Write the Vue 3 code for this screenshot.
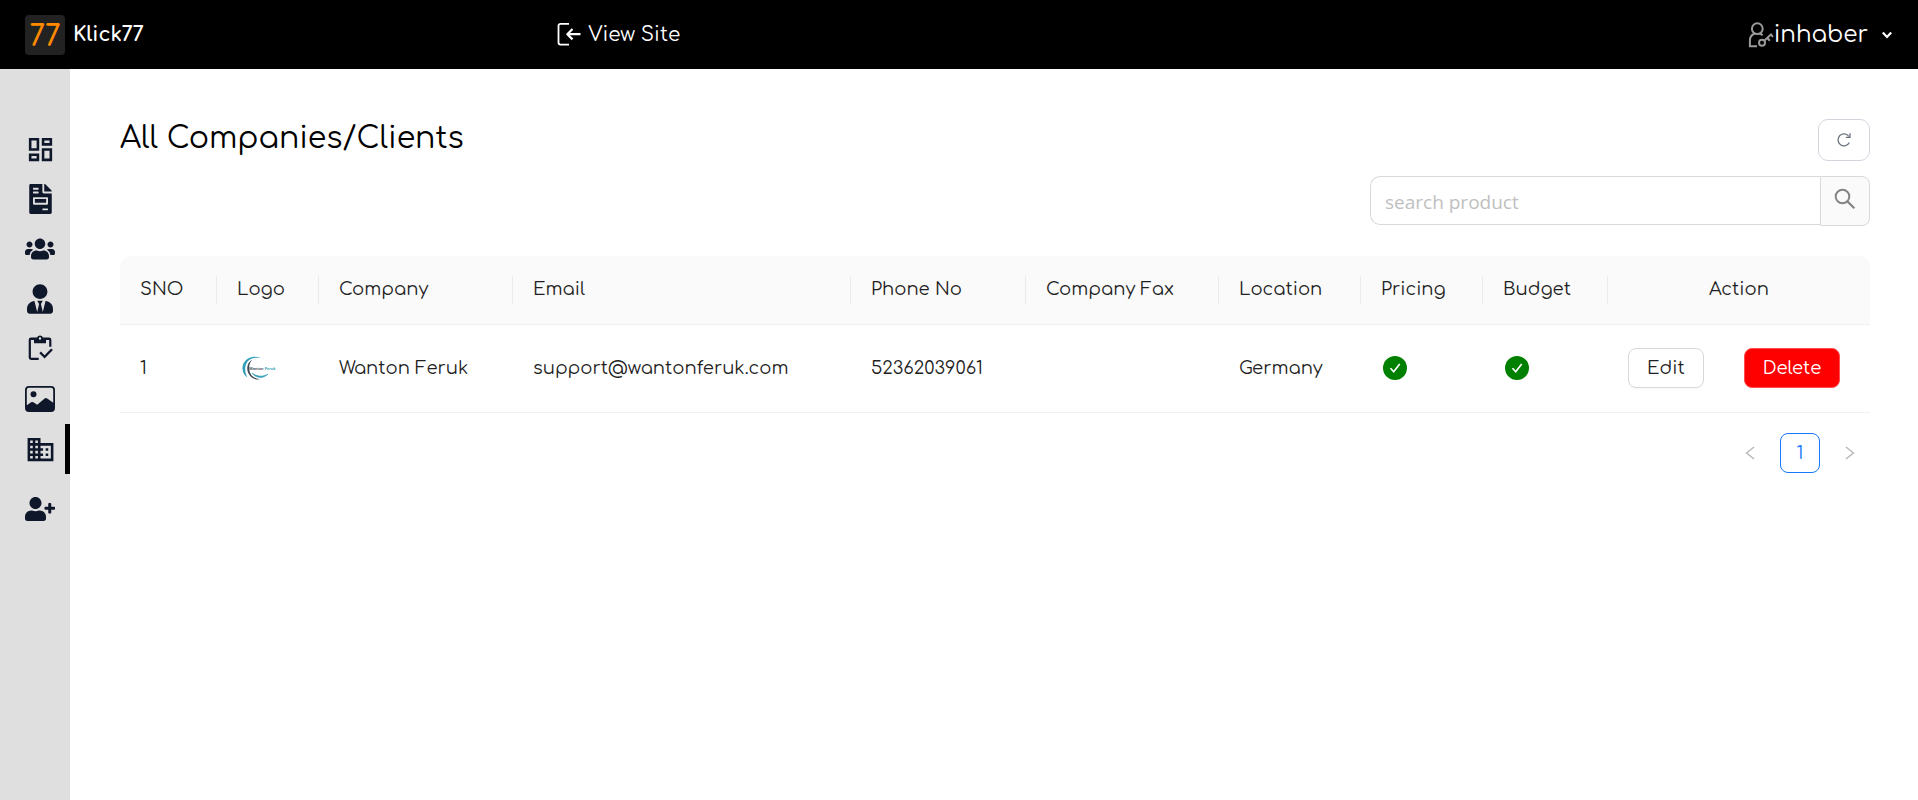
<script setup>
import { ref } from 'vue'

const search = ref('')
const active = ref('Companies')

const menu = [
  {
    name: 'Dashboard', box: '0 0 24 24', w: 31, h: 31,
    d: 'M19 5v2h-4V5h4M9 5v6H5V5h4m10 8v6h-4v-6h4M9 17v2H5v-2h4M21 3h-8v6h8V3zM11 3H3v10h8V3zm10 8h-8v10h8V11zm-10 4H3v6h8v-6z'
  },
  {
    name: 'Invoices', box: '0 0 384 512', w: 23, h: 30,
    d: 'M288 256H96v64h192v-64zm89-151L279.1 7c-4.5-4.5-10.6-7-17-7H256v128h128v-6.1c0-6.3-2.5-12.4-7-16.9zm-153 31V0H24C10.7 0 0 10.7 0 24v464c0 13.3 10.7 24 24 24h336c13.3 0 24-10.7 24-24V160H248c-13.2 0-24-10.8-24-24zM64 72c0-4.42 3.58-8 8-8h80c4.42 0 8 3.58 8 8v16c0 4.42-3.58 8-8 8H72c-4.42 0-8-3.58-8-8V72zm0 64c0-4.42 3.58-8 8-8h80c4.42 0 8 3.58 8 8v16c0 4.42-3.58 8-8 8H72c-4.42 0-8-3.58-8-8v-16zm256 304c0 4.42-3.58 8-8 8h-80c-4.42 0-8-3.58-8-8v-16c0-4.42 3.58-8 8-8h80c4.42 0 8 3.58 8 8v16zm0-200v96c0 8.84-7.16 16-16 16H80c-8.84 0-16-7.16-16-16v-96c0-8.84 7.16-16 16-16h224c8.84 0 16 7.16 16 16z'
  },
  {
    name: 'Users', box: '0 0 640 512', w: 30, h: 24,
    d: 'M96 224c35.3 0 64-28.7 64-64s-28.7-64-64-64-64 28.7-64 64 28.7 64 64 64zm448 0c35.3 0 64-28.7 64-64s-28.7-64-64-64-64 28.7-64 64 28.7 64 64 64zm32 32h-64c-17.6 0-33.5 7.1-45.1 18.6 40.3 22.1 68.9 62 75.1 109.4h66c17.7 0 32-14.3 32-32v-32c0-35.3-28.7-64-64-64zm-256 0c61.9 0 112-50.1 112-112S381.9 32 320 32 208 82.1 208 144s50.1 112 112 112zm76.8 32h-8.3c-20.8 10-43.9 16-68.5 16s-47.6-6-68.5-16h-8.3C179.6 288 128 339.6 128 403.2V432c0 26.5 21.5 48 48 48h288c26.5 0 48-21.5 48-48v-28.8c0-63.6-51.6-115.2-115.2-115.2zm-223.7-13.4C161.5 263.1 145.6 256 128 256H64c-35.3 0-64 28.7-64 64v32c0 17.7 14.3 32 32 32h65.9c6.3-47.4 34.9-87.3 75.2-109.4z'
  },
  {
    name: 'Managers', box: '0 0 448 512', w: 26, h: 30,
    d: 'M224 256c70.7 0 128-57.3 128-128S294.7 0 224 0 96 57.3 96 128s57.3 128 128 128zm95.8 32.6L272 480l-32-136 32-56h-96l32 56-32 136-47.8-191.4C56.9 292 0 350.3 0 422.4V464c0 26.5 21.5 48 48 48h352c26.5 0 48-21.5 48-48v-41.6c0-72.1-56.9-130.4-128.2-133.8z'
  },
  {
    name: 'Tasks', box: '0 0 30 30', w: 30, h: 30,
    d: 'M12 3.6a3.2 3.2 0 0 1 6 0h6a2.4 2.4 0 0 1 2.4 2.4v6.8h-2.2V6H21v3.2H9V6H5.9v17.8h7.8V26H6.1A2.4 2.4 0 0 1 3.7 23.6V6a2.4 2.4 0 0 1 2.4-2.4zM15 3.3a1.2 1.2 0 1 0 0 2.4a1.2 1.2 0 0 0 0-2.4zM15.9 17.6L19.6 21.3L26.2 14.5L27.9 16.1L19.6 24.6L14.3 19.2z'
  },
  {
    name: 'Gallery', box: '0 0 30 26', w: 30, h: 26,
    d: 'M4 0h22a4 4 0 0 1 4 4v18a4 4 0 0 1-4 4H4a4 4 0 0 1-4-4V4a4 4 0 0 1 4-4zM4 1.8A2.2 2.2 0 0 0 1.8 4v15.3l4.3-3a2 2 0 0 1 2.3 0l3.8 2.5L19.6 12.6a2 2 0 0 1 2.6-.1l6 4.3V4A2.2 2.2 0 0 0 26 1.8zM8.5 5.3a3 3 0 1 1 0 6a3 3 0 0 1 0-6z'
  },
  {
    name: 'Companies', box: '0 0 24 24', w: 31, h: 31,
    d: 'M12 7V3H2v18h20V7H12zM6 19H4v-2h2v2zm0-4H4v-2h2v2zm0-4H4V9h2v2zm0-4H4V5h2v2zm4 12H8v-2h2v2zm0-4H8v-2h2v2zm0-4H8V9h2v2zm0-4H8V5h2v2zm10 12h-8v-2h2v-2h-2v-2h2v-2h-2V9h8v10zm-2-8h-2v2h2v-2zm0 4h-2v2h2v-2z'
  },
  {
    name: 'Add user', box: '0 0 640 512', w: 30, h: 24, spaced: true,
    d: 'M624 208h-64v-64c0-8.8-7.2-16-16-16h-32c-8.8 0-16 7.2-16 16v64h-64c-8.8 0-16 7.2-16 16v32c0 8.8 7.2 16 16 16h64v64c0 8.8 7.2 16 16 16h32c8.8 0 16-7.2 16-16v-64h64c8.8 0 16-7.2 16-16v-32c0-8.8-7.2-16-16-16zm-400 48c70.7 0 128-57.3 128-128S294.7 0 224 0 96 57.3 96 128s57.3 128 128 128zm89.6 32h-16.7c-22.2 10.2-46.9 16-72.9 16s-50.6-5.8-72.9-16h-16.7C60.2 288 0 348.2 0 422.4V464c0 26.5 21.5 48 48 48h352c26.5 0 48-21.5 48-48v-41.6c0-74.2-60.2-134.4-134.4-134.4z'
  }
]

const columns = [
  { title: 'SNO', cls: 'c-sno' },
  { title: 'Logo', cls: 'c-logo' },
  { title: 'Company', cls: 'c-company' },
  { title: 'Email', cls: 'c-email' },
  { title: 'Phone No', cls: 'c-phone' },
  { title: 'Company Fax', cls: 'c-fax' },
  { title: 'Location', cls: 'c-location' },
  { title: 'Pricing', cls: 'c-pricing' },
  { title: 'Budget', cls: 'c-budget' },
  { title: 'Action', cls: 'c-action' }
]

const rows = [
  { sno: 1, company: 'Wanton Feruk', email: 'support@wantonferuk.com', phone: '52362039061', fax: '', location: 'Germany' }
]
</script>

<template>
  <div class="page">
    <header class="topbar">
      <a class="brand" href="#">
        <span class="brand-mark">77</span>
        <span class="brand-name">Klick77</span>
      </a>
      <a class="view-site" href="#">
        <svg width="26" height="26" viewBox="0 0 26 26" fill="none" stroke="currentColor" stroke-width="1.8" stroke-linejoin="round" aria-hidden="true">
          <path d="M13 1.8H4.5A2 2 0 0 0 2.5 3.8V20.6A2 2 0 0 0 4.5 22.6H13" />
          <path d="M24.500 12.200H11.500M16.500 7L11.300 12.200L16.500 17.400" stroke-width="2.200" />
        </svg>
        <span>View Site</span>
      </a>
      <button class="account" type="button">
        <svg class="account-icon" width="26" height="26" viewBox="0 0 26 26" fill="none" stroke="currentColor" stroke-width="2" aria-hidden="true">
          <circle cx="9.300" cy="6.700" r="5.400" />
          <path d="M9 24.200H1.900V18.500C1.900 15 4 12.600 6.800 11.500M11.800 11.500C13 12 13.800 12.500 14.600 13.200" />
          <circle cx="14" cy="20.800" r="3" />
          <path d="M16.200 18.700L23 12.500L25 15M19.300 16L21.800 18.700" />
        </svg>
        <span>inhaber</span>
        <svg class="caret" width="10" height="8" viewBox="0 0 10 8" fill="none" stroke="currentColor" stroke-width="2.200" aria-hidden="true">
          <path d="M.8 1.500L5 5.900L9.200 1.500" />
        </svg>
      </button>
    </header>

    <div class="body">
      <nav class="sidebar" aria-label="Main">
        <a
          v-for="item in menu"
          :key="item.name"
          href="#"
          class="nav-item"
          :class="{ active: item.name === active, spaced: item.spaced }"
          :aria-label="item.name"
          @click.prevent="active = item.name"
        >
          <svg :width="item.w" :height="item.h" :viewBox="item.box" fill="currentColor" fill-rule="evenodd" aria-hidden="true">
            <path :d="item.d" />
          </svg>
        </a>
      </nav>

      <main class="content">
        <div class="heading">
          <h1>All Companies/Clients</h1>
          <button class="refresh" type="button" aria-label="Refresh">
            <svg width="16" height="16" viewBox="0 0 16 16" fill="none" stroke="currentColor" stroke-width="1.300" aria-hidden="true">
              <path d="M13.400 10.500A6 6 0 1 1 13 4.500" />
              <path d="M14 1.200V5.400H9.800" />
            </svg>
          </button>
        </div>

        <form class="search" role="search" @submit.prevent>
          <input v-model="search" type="text" placeholder="search product" aria-label="search product" />
          <button type="submit" aria-label="Search">
            <svg width="22" height="22" viewBox="0 0 22 22" fill="none" stroke="currentColor" stroke-width="2" aria-hidden="true">
              <circle cx="8.500" cy="8.500" r="6.800" />
              <path d="M13.300 13.300L20.300 20.300" stroke-width="2.300" />
            </svg>
          </button>
        </form>

        <table>
          <colgroup>
            <col v-for="c in columns" :key="c.cls" :class="c.cls" />
          </colgroup>
          <thead>
            <tr>
              <th v-for="c in columns" :key="c.cls" scope="col"><span>{{ c.title }}</span></th>
            </tr>
          </thead>
          <tbody>
            <tr v-for="r in rows" :key="r.sno">
              <td>{{ r.sno }}</td>
              <td>
                <svg class="logo" width="40" height="30" viewBox="0 0 40 30" role="img" aria-label="Wanton Feruk">
                  <path d="M24 5C13 1 5 8 5.500 16C5.800 20 8 23 10.500 24.500C6.500 18 7.500 8 15 5.500C18 4.400 21 4.500 24 5z" fill="#2f9fb8" />
                  <path d="M15.500 6.500C10 9.500 9 15.500 11.500 20.500C13.500 24.500 17.500 27 23 26.500C17 25.500 13.500 22.500 12.500 18C11.500 13.500 12.500 9.500 15.500 6.500z" fill="#3d4a52" />
                  <path d="M15 20C19 25.500 26.500 26 31 21C26.500 24 20 24 15 20z" fill="#2f9fb8" stroke="#2f9fb8" stroke-width=".6" />
                  <text class="logo-text" x="12" y="17" fill="#4a555c">Wanton <tspan fill="#2f9fb8">Feruk</tspan></text>
                </svg>
              </td>
              <td>{{ r.company }}</td>
              <td>{{ r.email }}</td>
              <td>{{ r.phone }}</td>
              <td>{{ r.fax }}</td>
              <td>{{ r.location }}</td>
              <td v-for="k in ['Pricing', 'Budget']" :key="k">
                <svg width="28" height="24" viewBox="0 0 28 24" role="img" :aria-label="k + ' enabled'">
                  <circle cx="14" cy="12" r="12" fill="#008000" />
                  <path d="M9.500 12.200L12.700 15.700L18.700 8" fill="none" stroke="#fff" stroke-width="1.700" />
                </svg>
              </td>
              <td>
                <div class="actions">
                  <button type="button" class="btn">Edit</button>
                  <button type="button" class="btn danger">Delete</button>
                </div>
              </td>
            </tr>
          </tbody>
        </table>

        <nav class="pagination" aria-label="Pagination">
          <button type="button" disabled aria-label="Previous page">
            <svg width="10" height="14" viewBox="0 0 10 14" fill="none" stroke="currentColor" stroke-width="1.400" aria-hidden="true"><path d="M9 1L1.500 7L9 13" /></svg>
          </button>
          <button type="button" class="current" aria-current="page">1</button>
          <button type="button" disabled aria-label="Next page">
            <svg width="10" height="14" viewBox="0 0 10 14" fill="none" stroke="currentColor" stroke-width="1.400" aria-hidden="true"><path d="M1 1L8.500 7L1 13" /></svg>
          </button>
        </nav>
      </main>
    </div>
  </div>
</template>

<style>
body {
  margin: 0;
}
</style>

<style scoped>
* {
  box-sizing: border-box;
}

.page {
  min-height: 100vh;
  display: flex;
  flex-direction: column;
  background: #fff;
  color: #1f1f1f;
  font-family: Comfortaa, Lato, "Open Sans", sans-serif;
  font-size: 18px;
  line-height: 28px;
}

button,
input {
  font: inherit;
  color: inherit;
  margin: 0;
}

button {
  cursor: pointer;
}

a {
  color: inherit;
  text-decoration: none;
}

svg {
  display: block;
  flex: none;
}

.topbar {
  height: 69px;
  background: #000;
  color: #fff;
  display: grid;
  grid-template-columns: 29% auto 1fr;
  align-items: center;
}

.brand {
  display: flex;
  align-items: center;
  gap: 8px;
  padding-left: 25px;
}

.brand-mark {
  width: 40px;
  height: 40px;
  border-radius: 4px;
  background: #222;
  color: #ff8a00;
  font-size: 28px;
  font-weight: 600;
  line-height: 44px;
  text-align: center;
}

.brand-name {
  font-size: 20px;
  font-weight: 700;
}

.view-site {
  display: flex;
  align-items: center;
  gap: 6px;
  font-size: 20px;
}

.account {
  justify-self: end;
  display: flex;
  align-items: center;
  padding: 0;
  margin-right: 26px;
  border: 0;
  background: none;
  font-size: 23px;
}

.account-icon {
  color: #999;
}

.caret {
  margin-left: 14px;
}

.body {
  flex: 1;
  display: flex;
}

.sidebar {
  flex: none;
  width: 70px;
  padding-top: 55px;
  background: #dfdfdf;
  color: #0f172a;
}

.nav-item {
  height: 50px;
  display: flex;
  align-items: center;
  justify-content: center;
  border-right: 5px solid transparent;
  padding-left: 15px;
}

.nav-item.active {
  border-right-color: #000;
}

.nav-item.spaced {
  margin-top: 10px;
}

.content {
  flex: 1;
  min-width: 0;
  padding: 50px 48px 50px 50px;
}

.heading {
  display: flex;
  justify-content: space-between;
  align-items: flex-start;
}

h1 {
  margin: 0;
  color: #000;
  font-size: 30px;
  font-weight: 400;
  line-height: 40px;
}

.refresh {
  width: 52px;
  height: 42px;
  display: grid;
  place-items: center;
  padding: 0;
  border: 1px solid #d1d5db;
  border-radius: 10px;
  background: #fff;
  color: #6b7280;
}

.search {
  width: 500px;
  max-width: 100%;
  margin: 15px 0 30px auto;
  display: flex;
  align-items: flex-start;
}

.search input {
  flex: 1;
  min-width: 0;
  height: 49px;
  padding: 2px 14px 0;
  border: 1px solid #d9d9d9;
  border-right: 0;
  border-radius: 10px 0 0 10px;
  background: #fff;
  font-family: "Open Sans", "Noto Sans", sans-serif;
  font-size: 19px;
}

.search input::placeholder {
  color: #bfbfbf;
  opacity: 1;
}

.search button {
  width: 50px;
  height: 50px;
  display: grid;
  place-items: center;
  padding: 0 0 4px;
  border: 1px solid #d9d9d9;
  border-radius: 0 8px 8px 0;
  background: #fafafa;
  color: #858585;
}

table {
  width: 100%;
  table-layout: fixed;
  border-collapse: separate;
  border-spacing: 0;
}

.c-sno { width: 97px; }
.c-logo { width: 102px; }
.c-company { width: 194px; }
.c-email { width: 338px; }
.c-phone { width: 175px; }
.c-fax { width: 193px; }
.c-location { width: 142px; }
.c-pricing { width: 122px; }
.c-budget { width: 125px; }
.c-action { width: 262px; }

th,
td {
  border-bottom: 1px solid #f0f0f0;
  text-align: left;
  white-space: nowrap;
}

th {
  padding: 20px 0;
  background: #fafafa;
  font-weight: 400;
}

th span {
  display: block;
  padding: 0 20px 2px;
  border-right: 1px solid #ebebeb;
  line-height: 26px;
}

th:first-child {
  border-top-left-radius: 10px;
}

th:last-child {
  border-top-right-radius: 10px;
  text-align: center;
}

th:last-child span {
  border-right: 0;
}

td {
  height: 88px;
  padding: 0 20px 2px;
}

.logo-text {
  font-family: "Liberation Sans", sans-serif;
  font-size: 4px;
  font-weight: 700;
}

.actions {
  display: flex;
  gap: 40px;
}

.btn {
  height: 40px;
  padding: 0 18px;
  border: 1px solid #d9d9d9;
  border-radius: 8px;
  background: #fff;
  box-shadow: 0 2px 0 rgba(0, 0, 0, 0.02);
}

.btn.danger {
  border-color: #ff4d4f;
  background: #f00;
  color: #fff;
}

.pagination {
  display: flex;
  justify-content: flex-end;
  gap: 10px;
  margin-top: 20px;
}

.pagination button {
  width: 40px;
  height: 40px;
  display: grid;
  place-items: center;
  padding: 0;
  border: 0;
  border-radius: 8px;
  background: none;
  color: #b8b8b8;
}

.pagination .current {
  border: 1px solid #1677ff;
  background: #fff;
  color: #1677ff;
}
</style>
